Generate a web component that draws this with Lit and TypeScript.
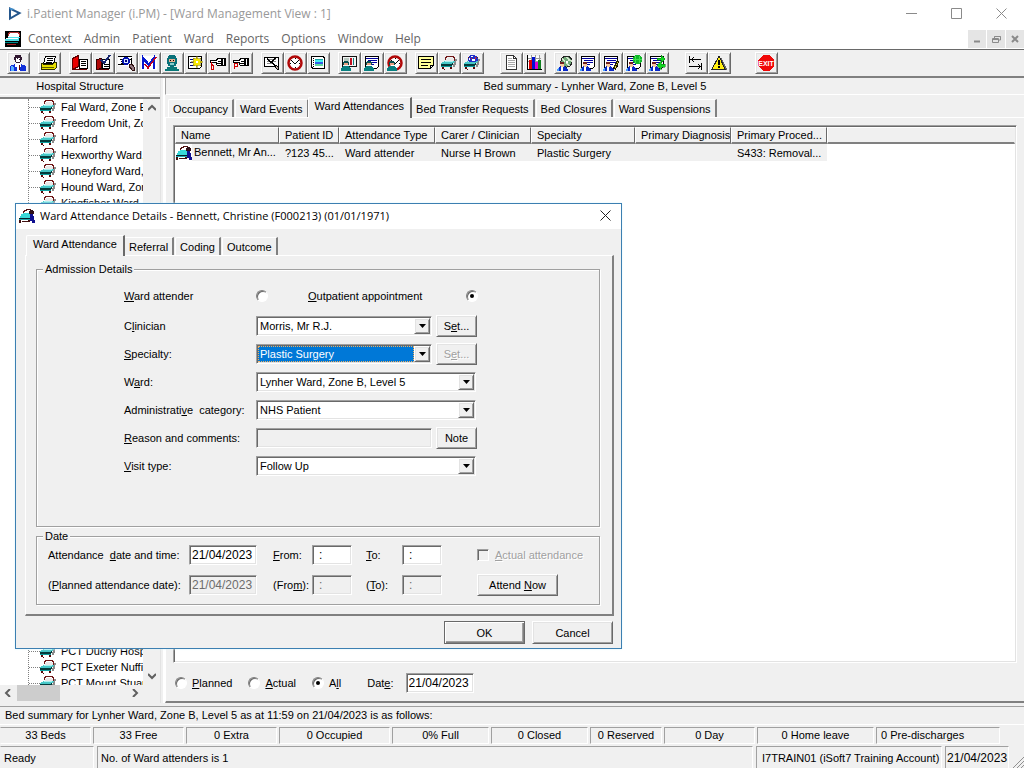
import { LitElement, html, svg, css } from "lit";
import { customElement, property, state } from "lit/decorators.js";
import { classMap } from "lit/directives/class-map.js";

// 16x16 pixel glyphs, composed from a few recurring parts.
const sheet = svg`<path d="M1.500 1.500h13v10l-2 2h-11z" fill="#fff" stroke="#000"/><path d="M2 3.500h12M4 5.500h9M4 7.500h9M4 9.500h6" stroke="#0000a0"/>`;
const teal = svg`<path d="M3 6h4v1h1v3H2V7h1z" fill="#085050"/><path d="M3 8h4v2H3z" fill="#e8a080"/><path d="M0 16v-3h1v-1h1v-1h6v1h1v1h1v3z" fill="#088080"/>`;
const carer = svg`<path d="M3 8h4v4H3z" fill="#f8c8a0"/><path d="M3 7h4v2H3z" fill="#702020"/><path d="M0 16v-2l3-3 2 2 2-2 4 4v1z" fill="#0828c8"/><path d="M4 12h2v4H4z" fill="#fff"/><path d="M0 16v-2l2-1v3z" fill="#48a0ff"/>`;
const clockFace = svg`<circle cx="8" cy="8" r="6.500" fill="#fff" stroke="#b00808" stroke-width="2.500" shape-rendering="auto"/><path d="M8 3v1M8 12v1M3 8h1M12 8h1M4.500 5.500L8 9l3.500-3.500" fill="none" stroke="#000"/>`;
const bedShape = svg`<path d="M13 4h3v2h-1v4h-1v2h-2v-3h1z" fill="#8a8a8a"/><path d="M6 3h6v1h1v2H5V4h1z" fill="#e8e8e8"/><path d="M4 5V2h1V1h8v1h1v4h-1V3h-1V2H6v1H5v2z" fill="#701818"/><path d="M3 6h11v1h-1v1h-1v2H0V8h1V7h2z" fill="#48c8c8"/><path d="M4 6h8v1H4z" fill="#a8f0f0"/><path d="M0 9h11V8h1v2h-1v1H0z" fill="#043c3c"/><path d="M0 11h11v1H0z" fill="#10a0a0"/><path d="M1 12h2v2H1zM9 12h2v2H9zM3 14h1v1H3z" fill="#5a0808"/>`;
const hand = svg`<path d="M.5 5.500h6l1-2h4v7H7.500l-1.500-2V7.500H.5z" fill="#fff" stroke="#000"/><path d="M8 6.500h3M7 8.500h4" stroke="#000"/><path d="M12 3h4v8h-4z" fill="#000"/><path d="M13 4h1v6h-1z" fill="#fff"/>`;

const glyphs: Record<string, unknown> = {
  doctor: svg`<path d="M5 0h6v2h1v3h-1v2h-1v1H6V7H5V5H4V2h1z" fill="#301830"/><path d="M6 3h4v4H6z" fill="#fff"/><path d="M7 3h1v1H7zM9 4h1v1H9z" fill="#301830"/><path d="M0 16v-5h1v-1h3V9h8v1h3v1h1v5z" fill="#1030d8"/><path d="M6 8h4v1h1v3h-1v4H7v-4H5V9h1z" fill="#fff"/><path d="M9 10h1v5H9z" fill="#600"/><path d="M1 16v-5h2v1h1v4z" fill="#58b0ff"/>`,
  print: svg`<path d="M4.500 1.500h10l-2 7h-10z" fill="#fff" stroke="#000"/><path d="M6 3.500h6M6 5.500h6M5 7.500h6" stroke="#000"/><path d="M.5 8.500h2v1h9l2-2h2v5l-2 2H.5z" fill="#e8e000" stroke="#303000"/><path d="M1 12.500h12" stroke="#606000"/>`,
  admit: svg`<path d="M7.500 4.500h8v9h-8z" fill="#fff" stroke="#000"/><path d="M9 6.500h5M9 8.500h5M9 10.500h5" stroke="#000"/><path d="M.5 3.500l6-3v11l-6 3z" fill="#e80000" stroke="#600000"/><path d="M1 14h14v1H1z" fill="#600"/>`,
  admitEdit: svg`<path d="M7.500 4.500h7v9h-7z" fill="#fff" stroke="#000"/><path d="M9 9.500h5M9 11.500h5" stroke="#000"/><path d="M1.500 4.500l5-1v10l-5 1z" fill="#b00808" stroke="#300"/><path d="M6 5l3 3 6-8" fill="none" stroke="#182870" stroke-width="2"/><path d="M1 14h13v1H2z" fill="#500"/>`,
  search: svg`<path d="M0 1h14v10H0z" fill="#fff"/><path d="M0 1.500h14M2 4.500h11M0 9.500h9" stroke="#000"/><path d="M3 6h3M3 8h3" stroke="#000"/><circle cx="8" cy="6" r="3" fill="#d8e8ff" stroke="#0010b0" stroke-width="1.500"/><path d="M7 5h2v2H7z" fill="#000080"/><path d="M13 3h1v6h-1z" fill="#000"/><path d="M11 9h3l2 3v3h-2l-3-4z" fill="#907880" stroke="#301010"/>`,
  tick: svg`<path d="M0 1h16v14H0z" fill="#fff"/><path d="M2 14V3l6 7 5-7v11" fill="none" stroke="#0818d0" stroke-width="2.500"/><path d="M4 9l3 4 8-11" fill="none" stroke="#c00020" stroke-width="1.500"/>`,
  surgeon: svg`<path d="M5 0h6v1h1v2h1v6h-1v2h-2v1H6v-1H4V9H3V3h1V1h1z" fill="#087078"/><path d="M5 4h6v3H5z" fill="#e8b090"/><path d="M6 5h1v1H6zM9 5h1v1H9z" fill="#000"/><path d="M6 8h4v2H6z" fill="#8cc"/><path d="M1 16v-2h2v-2h10v2h2v2z" fill="#087878"/>`,
  fresh: svg`<path d="M1.500 1.500h13v10l-2 2h-11z" fill="#fff" stroke="#000"/><path d="M3 4.500h6M3 7.500h4M3 10.500h5" stroke="#000080"/><path d="M10 1l1 3 3-1-1 3 3 1-3 1 1 3-3-1-1 3-1-3-3 1 1-3-3-1 3-1-1-3 3 1z" fill="#f8e800" stroke="#807000" stroke-width=".5"/><path d="M9 6h2v2H9z" fill="#fff"/>`,
  point: svg`${hand}<path d="M1.500 7v7h2v-3l-2-2" fill="none" stroke="#d00000"/>`,
  pointBack: svg`${hand}<path d="M1.500 14V8.500h3v3h-3" fill="none" stroke="#d00000"/>`,
  write: svg`<path d="M.5 2.500h14v9H.5z" fill="#fff" stroke="#000"/><path d="M3 4.500h9M3 6.500h9M3 8.500h6" stroke="#888"/><path d="M3 4l9 7M11 3L8 7" stroke="#000" stroke-width="1.500"/><path d="M12 10l3 3-1 2-3-3z" fill="#b8a8a0" stroke="#000"/>`,
  clock: clockFace,
  notes: svg`<path d="M1.500 1.500h12v1h1v11h-12v-1h-1z" fill="#fff" stroke="#000"/><path d="M5 4h8v1H5z" fill="#18a0a0"/><path d="M5 5h8v2H5z" fill="#40f0f0"/><path d="M5 7h8v2H5z" fill="#3060e8"/><path d="M5 9h8v2H5z" fill="#60d8a0"/><path d="M3.500 3v10" stroke="#000" stroke-dasharray="1 1"/>`,
  ward: svg`<path d="M1.500 1.500h14v10h-14z" fill="#f4f4f4" stroke="#111"/><path d="M3 3h5v6H3z" fill="#b8c8c0"/><path d="M9 3h2v7H9z" fill="#c01020"/><path d="M12 3h1v7h-1z" fill="#108080"/>${teal}`,
  tealSheet: svg`${sheet}${teal}`,
  tealClock: svg`${clockFace}${teal}`,
  memo: svg`<path d="M.5 1.500h15v9l-3 3H.5z" fill="#ffff98" stroke="#000"/><path d="M3 4.500h10M3 7.500h10M3 10.500h7" stroke="#000"/><path d="M12.500 13v-2.500H15" fill="#fff" stroke="#000"/>`,
  bed: bedShape,
  bedMove: svg`${bedShape}<path d="M6 0h5v1h2v2h1v3h-2v1H5V6H4V3h1V1h1z" fill="#2030c8"/><path d="M7 1h2v1H7zM8 4h3v2H8zM5 3h1v2H5z" fill="#fff"/><path d="M7 3h1v1H7zM11 2h1v2h-1z" fill="#e02020"/>`,
  page: svg`<path d="M3.500.5h7l3 3v11h-10z" fill="#fff" stroke="#333"/><path d="M10.500 0v3.500H14" fill="none" stroke="#333"/><path d="M5 3.500h4M5 5.500h7M5 7.500h7M5 9.500h7M5 11.500h7" stroke="#aaa"/>`,
  chart: svg`<path d="M2 1h12v13H2z" fill="#fff"/><path d="M1 3.500h14M1 6.500h14M5.500 0v14M9.500 0v14M13.500 0v14" stroke="#999"/><path d="M1.500 0v14.500H16" fill="none" stroke="#000"/><path d="M3 5h3v9H3z" fill="#e00000"/><path d="M6 2h3v12H6z" fill="#0010d0"/><path d="M9 7h3v7H9z" fill="#e000d0"/><path d="M12 5h3v9h-3z" fill="#108020"/>`,
  world: svg`<circle cx="9.500" cy="6.500" r="5.500" fill="#70a878" stroke="#222"/><path d="M10 2l2 3 3 1M5 4l3 2M12 11l-2-3" fill="none" stroke="#d8e8d0" stroke-width="1.500"/><path d="M9 6h2v2H9z" fill="#fff"/>${carer}`,
  carerSheet: svg`${sheet}${carer}`,
  carerPen: svg`${sheet}${carer}<path d="M12.500 14.500l-1.500-2 3.500-7 1 1z" fill="#f0e040" stroke="#220"/>`,
  carerGreen: svg`${sheet}<path d="M9 0h5v1h1v1h1v5h-1v1h-1v1H9V8H8V7H7V2h1V1h1z" fill="#10b828"/><path d="M9.500 1v7M13.500 1v7M7 4.500h9" stroke="#40e050"/>${carer}`,
  carerSwap: svg`${sheet}${carer}<path d="M8 3h4V0l4 4-4 4V5H8zM16 9h-4V6L8 10.500l4 4V12h4z" fill="#10d820" stroke="#087010" stroke-width=".5"/>`,
  jump: svg`<path d="M1.500 1v7M2 4.500h11M6 2L3.500 4.500 6 7M13.500 8v7M1 11.500h12M10 9l2.500 2.500L10 14" fill="none" stroke="#000" stroke-width="1.300"/>`,
  warn: svg`<path d="M10 2l6 12-1 1h-3z" fill="#666"/><path d="M8 1L1 14h13z" fill="#ffee10" stroke="#222"/><path d="M7 5h2v5H7zM7 11h2v2H7z" fill="#000"/>`,
  exit: svg`<path d="M5 0h6l5 5v6l-5 5H5l-5-5V5z" fill="#f00808"/><text x="8" y="11" text-anchor="middle" font-family="Liberation Sans, sans-serif" font-size="7" font-weight="bold" fill="#fff">EXIT</text>`,
  patient: svg`<path d="M4 5V3h1V2h2V1h4v1h1" fill="none" stroke="#501010"/><path d="M10 3h1V2h3v1h1v3h-5z" fill="#301018"/><path d="M10 6h4v2h1v4h1v3h-3v-2h-2z" fill="#101090"/><path d="M4 5h6v1h1v4H1V8h1V6h2z" fill="#38d8d8"/><path d="M0 10h11v1H0z" fill="#04202c"/><path d="M0 11h11v1H0z" fill="#20a8b0"/><path d="M0 12h2v3H0zM9 12h2v2H9zM3 13h6v1H3z" fill="#401010"/>`,
  appBed: svg`<path d="M0 0h16v16H0z" fill="#000"/><path d="M4 2h9v1h1v3H3V3h1z" fill="#fff"/><path d="M3 5V2h1V1h9v1h1v3" fill="none" stroke="#b03030"/><path d="M3 6h12v1h-1v3H0V8h1V7h2z" fill="#50e0e8"/><path d="M1 7h12v1H1z" fill="#fff"/><path d="M0 11h13v1H0z" fill="#088"/><path d="M2 13h9v1H2z" fill="#a02020"/>`,
};

const icon = (name: string) =>
  html`<svg class="icon" width="16" height="16" viewBox="0 0 16 16" shape-rendering="crispEdges" aria-hidden="true">${glyphs[name]}</svg>`;

// Shared look of the raised and sunken 3-D edges.
const chrome = css`
  * { box-sizing: border-box; }
  .icon { display: block; flex: none; overflow: visible; }
  button, input, select { font: inherit; color: inherit; margin: 0; border-radius: 0; outline: none; }
  .btn {
    background: #f0f0f0; border: 1px solid; border-color: #fff #696969 #696969 #fff;
    box-shadow: inset 1px 1px #e3e3e3, inset -1px -1px #a0a0a0;
    padding: 0; display: flex; align-items: center; justify-content: center; white-space: nowrap;
  }
  .btn:disabled, .off { color: #a0a0a0; text-shadow: 1px 1px #fff; }
  .sunken {
    background: #fff; border: 1px solid; border-color: #a0a0a0 #fff #fff #a0a0a0;
    box-shadow: inset 1px 1px #696969, inset -1px -1px #e3e3e3; padding: 1px;
  }
  input.sunken { height: 20px; padding: 0 2px; font-size: 12px; }
  input.sunken:disabled { background: #f0f0f0; color: #6d6d6d; }
  input[type="radio"] {
    appearance: none; width: 12px; height: 12px; border-radius: 50%; flex: none; background: #fff;
    border: 1px solid; border-color: #808080 #fff #fff #808080;
    box-shadow: inset 1px 1px #696969; display: grid; place-content: center;
  }
  input[type="radio"]:checked::before { content: ""; width: 4px; height: 4px; border-radius: 50%; background: #000; }
  input[type="checkbox"] {
    appearance: none; width: 12px; height: 12px; flex: none; background: #f0f0f0;
    border: 1px solid; border-color: #a0a0a0 #fff #fff #a0a0a0; box-shadow: inset 1px 1px #696969;
  }
  u { text-underline-offset: 1px; }
`;

@customElement("tab-strip")
export class TabStrip extends LitElement {
  @property({ attribute: false }) tabs: string[] = [];
  @property({ type: Number }) selected = 0;

  static styles = [chrome, css`
    :host { display: flex; align-items: flex-end; height: 20px; padding-left: 3px; }
    .tab {
      height: 18px; padding: 1px 4px 0; margin: 0 1px 0 0; background: #f0f0f0; white-space: nowrap;
      border: solid; border-width: 1px 2px 0 1px; border-color: #fff #808080 #fff #fff;
      border-top-left-radius: 2px;
    }
    .tab.on { height: 21px; padding: 0 6px 4px; margin: 0 -1px -1px -2px; position: relative; border-right-color: #696969; }
  `];

  render() {
    return this.tabs.map((t, i) => html`
      <button role="tab" class=${classMap({ tab: true, on: i === this.selected })}
        aria-selected=${i === this.selected} @click=${() => (this.selected = i)}>${t}</button>`);
  }
}

@customElement("tool-bar")
export class ToolBar extends LitElement {
  private groups: { gap: number; items: string[] }[] = [
    { gap: 0, items: ["doctor"] },
    { gap: 8, items: ["print"] },
    { gap: 8, items: ["admit", "admitEdit", "search", "tick", "surgeon", "fresh", "point", "pointBack"] },
    { gap: 8, items: ["write", "clock", "notes"] },
    { gap: 8, items: ["ward", "tealSheet", "tealClock"] },
    { gap: 8, items: ["memo", "bed", "bedMove"] },
    { gap: 16, items: ["page", "chart"] },
    { gap: 8, items: ["world", "carerSheet", "carerPen", "carerGreen", "carerSwap"] },
    { gap: 16, items: ["jump", "warn"] },
    { gap: 24, items: ["exit"] },
  ];

  static styles = [chrome, css`
    :host { display: flex; align-items: center; height: 29px; padding: 0 7px; background: #f0f0f0; border-top: 1px solid #696969; border-bottom: 2px solid #808080; }
    .group { display: flex; }
    .g8 { margin-left: 8px; }
    .g16 { margin-left: 16px; }
    .g24 { margin-left: 24px; }
    .btn { width: 23px; height: 22px; padding-right: 1px; }
  `];

  render() {
    return this.groups.map((g) => html`
      <div class="group g${g.gap}">
        ${g.items.map((n) => html`<button class="btn" aria-label=${n}>${icon(n)}</button>`)}
      </div>`);
  }
}

@customElement("ward-tree")
export class WardTree extends LitElement {
  private upper = ["Fal Ward, Zone E", "Freedom Unit, Zo", "Harford", "Hexworthy Ward,", "Honeyford Ward,", "Hound Ward, Zor", "Kingfisher Ward"];
  private lower = ["PCT Duchy Hosp", "PCT Exeter Nuffie", "PCT Mount Stuar"];

  static styles = [chrome, css`
    :host { display: grid; grid-template: minmax(0, 1fr) 16px / minmax(0, 1fr) 17px; background: #f0f0f0; border-top: 2px solid #808080; }
    .tree { background: #fff; overflow: hidden; display: flex; flex-direction: column; justify-content: space-between; padding-left: 28px; }
    ul { list-style: none; margin: 0; padding: 0; border-left: 1px dotted #808080; }
    .fill { flex: 1; border-left: 1px dotted #808080; }
    .end { margin-bottom: -6px; }
    li { display: flex; align-items: center; height: 16px; white-space: nowrap; }
    li::before { content: ""; width: 11px; border-top: 1px dotted #808080; flex: none; }
    .name { padding-left: 5px; }
    .v, .h { display: flex; align-items: center; justify-content: space-between; }
    .v { flex-direction: column; padding: 5px 0; }
    .h { padding: 0 4px; }
    .thumb { flex: none; width: 43px; height: 16px; background: #cdcdcd; margin-right: auto; margin-left: 5px; }
    .arrow { flex: none; fill: none; stroke: #606060; stroke-width: 2; }
  `];

  private rows(names: string[]) {
    return names.map((n) => html`<li>${icon("bed")}<span class="name">${n}</span></li>`);
  }

  render() {
    const a = (d: string) => html`<svg class="arrow" width="8" height="8" viewBox="0 0 8 8"><path d=${d} /></svg>`;
    return html`
      <div class="tree">
        <ul>${this.rows(this.upper)}</ul>
        <div class="fill"></div>
        <ul class="end">${this.rows(this.lower)}</ul>
      </div>
      <div class="v">${a("M0 6l4-4 4 4")}${a("M0 2l4 4 4-4")}</div>
      <div class="h">${a("M6 0L2 4l4 4")}<div class="thumb"></div>${a("M2 0l4 4-4 4")}</div>
      <div></div>`;
  }
}

@customElement("attendance-dialog")
export class AttendanceDialog extends LitElement {
  @state() private kind = "out";

  static styles = [chrome, css`
    :host { display: flex; flex-direction: column; background: #f0f0f0; border: 1px solid #3c7fb1; box-shadow: 0 0 2px #d8f4ff; }
    .title { display: flex; align-items: center; height: 25px; background: #fff; padding: 0 10px 2px 3px; font: 11px "Open Sans", "Noto Sans", sans-serif; }
    .title .name { flex: 1; padding-left: 5px; white-space: nowrap; }
    .close { border: 0; background: none; padding: 0; display: flex; }
    .body { padding: 6px 7px 4px 9px; display: flex; flex-direction: column; }
    .page { border: solid; border-width: 1px 2px 2px 1px; border-color: #fff #808080 #808080 #fff; padding: 7px 12px 9px 10px; display: flex; flex-direction: column; gap: 3px; }
    fieldset { min-width: 0; margin: 0; border: 1px solid #a0a0a0; box-shadow: 1px 1px #fff, inset 1px 1px #fff; }
    legend { padding: 0 2px; line-height: 13px; background: #f0f0f0; }
    .admission { padding: 6px 0 46px 87px; }
    .admission legend { margin-left: -81px; }
    .row { display: flex; align-items: center; height: 28px; }
    .row.kind { margin-bottom: 2px; }
    .lab { width: 132px; flex: none; white-space: pre; }
    .second { width: 158px; margin-left: 40px; }
    .combo { display: flex; width: 220px; height: 20px; }
    .combo.short, .text { width: 176px; flex: none; }
    .combo select { flex: 1; min-width: 0; appearance: none; border: 1px solid #fff; background: #fff; padding: 0 1px; height: 16px; }
    .combo.focus select { background: #0078d7; color: #fff; border: 1px dotted #f0b060; }
    .drop { width: 16px; height: 16px; margin: 0; pointer-events: none; }
    .set { width: 41px; height: 22px; margin-left: 4px; }
    .dates { padding: 2px 0 9px 11px; }
    .dates legend { margin-left: -5px; }
    .grid { display: grid; grid-template-columns: 141px 84px 39px 54px 36px 75px 1fr; row-gap: 10px; align-items: center; white-space: pre; }
    .grid > * { height: 20px; line-height: 20px; }
    .date { width: 68px; }
    .time { width: 40px; }
    input.time { padding-left: 6px; }
    .check { display: flex; align-items: center; gap: 6px; }
    .grid .btn { width: 81px; height: 22px; margin: -1px 0; }
    .actions { display: flex; justify-content: flex-end; gap: 7px; padding: 5px 1px 0 0; }
    .actions .btn { width: 81px; height: 23px; }
    .actions .ok { border-color: #696969; box-shadow: inset 1px 1px #fff, inset -1px -1px #808080, inset -2px -2px #a0a0a0; }
  `];

  private combo(id: string, value: string, cls = "") {
    return html`<div class="combo sunken ${cls}">
      <select id=${id}><option>${value}</option></select>
      <span class="btn drop"><svg width="7" height="4" viewBox="0 0 7 4"><path d="M0 0h7L3.500 4z" /></svg></span>
    </div>`;
  }

  render() {
    return html`
      <div class="title">
        ${icon("patient")}
        <span class="name">Ward Attendance Details - Bennett, Christine (F000213) (01/01/1971)</span>
        <button class="close" aria-label="Close"><svg width="11" height="11" viewBox="0 0 11 11"><path d="M.5.5l10 10M10.500.5l-10 10" stroke="#222" fill="none" /></svg></button>
      </div>
      <div class="body">
        <tab-strip .tabs=${["Ward Attendance", "Referral", "Coding", "Outcome"]}></tab-strip>
        <div class="page">
          <fieldset class="admission">
            <legend>Admission Details</legend>
            <div class="row kind">
              <label class="lab" for="attender"><u>W</u>ard attender</label>
              <input type="radio" name="kind" id="attender" .checked=${this.kind === "ward"} @change=${() => (this.kind = "ward")} />
              <label class="second" for="outpatient"><u>O</u>utpatient appointment</label>
              <input type="radio" name="kind" id="outpatient" .checked=${this.kind === "out"} @change=${() => (this.kind = "out")} />
            </div>
            <div class="row"><label class="lab" for="clin">C<u>l</u>inician</label>${this.combo("clin", "Morris, Mr R.J.", "short")}<button class="btn set"><span>S<u>e</u>t...</span></button></div>
            <div class="row"><label class="lab" for="spec"><u>S</u>pecialty:</label>${this.combo("spec", "Plastic Surgery", "short focus")}<button class="btn set" disabled><span>S<u>e</u>t...</span></button></div>
            <div class="row"><label class="lab" for="ward">W<u>a</u>rd:</label>${this.combo("ward", "Lynher Ward, Zone B, Level 5")}</div>
            <div class="row"><label class="lab" for="cat">Administrati<u>v</u>e  category:</label>${this.combo("cat", "NHS Patient")}</div>
            <div class="row"><label class="lab" for="reason"><u>R</u>eason and comments:</label><input class="sunken text" id="reason" disabled /><button class="btn set">Note</button></div>
            <div class="row"><label class="lab" for="visit"><u>V</u>isit type:</label>${this.combo("visit", "Follow Up")}</div>
          </fieldset>
          <fieldset class="dates">
            <legend>Date</legend>
            <div class="grid">
              <label for="d1">Attendance  <u>d</u>ate and time:</label><input class="sunken date" id="d1" value="21/04/2023" />
              <label for="f1"><u>F</u>rom:</label><input class="sunken time" id="f1" value=":" />
              <label for="t1"><u>T</u>o:</label><input class="sunken time" id="t1" value=":" />
              <label class="check off"><input type="checkbox" disabled /><span><u>A</u>ctual attendance</span></label>
              <label for="d2">(<u>P</u>lanned attendance date):</label><input class="sunken date" id="d2" value="21/04/2023" disabled />
              <label for="f2">(Fro<u>m</u>):</label><input class="sunken time" id="f2" value=":" disabled />
              <label for="t2">(<u>T</u>o):</label><input class="sunken time" id="t2" value=":" disabled />
              <button class="btn"><span>Attend <u>N</u>ow</span></button>
            </div>
          </fieldset>
        </div>
        <div class="actions"><button class="btn ok">OK</button><button class="btn">Cancel</button></div>
      </div>`;
  }
}

@customElement("app-root")
export class AppRoot extends LitElement {
  @state() private filter = "All";

  private columns = ["Name", "Patient ID", "Attendance Type", "Carer / Clinician", "Specialty", "Primary Diagnosis", "Primary Proced..."];
  private record = ["Bennett, Mr An...", "?123 45...", "Ward attender", "Nurse H Brown", "Plastic Surgery", "", "S433: Removal..."];
  private counts = ["33 Beds", "33 Free", "0 Extra", "0 Occupied", "0% Full", "0 Closed", "0 Reserved", "0 Day", "0 Home leave", "0 Pre-discharges"];

  static styles = [chrome, css`
    :host { display: flex; flex-direction: column; height: 100vh; overflow: hidden; background: #f0f0f0; color: #000; font: 11px "Liberation Sans", Arial, sans-serif; }
    .segoe { font-family: "Open Sans", "Noto Sans", sans-serif; font-size: 12px; }
    .titlebar { display: flex; align-items: center; height: 28px; flex: none; background: #fff; color: #999; padding: 0 0 2px 8px; }
    .titlebar .name { flex: 1; padding-left: 5px; }
    .win { width: 45px; height: 26px; border: 0; background: none; padding: 0; display: grid; place-content: center; }
    .win svg, .mdi svg { fill: none; stroke: #8a8a8a; display: block; }
    .menubar { display: flex; align-items: center; height: 21px; flex: none; background: #fff; color: #666; padding-left: 5px; }
    .menubar nav { display: flex; flex: 1; gap: 12px; padding-left: 7px; }
    .menubar nav button { border: 0; background: none; padding: 0; }
    .mdis { display: flex; gap: 1px; }
    .mdi { width: 18px; height: 18px; border: 0; padding: 0; background: #e5e5e5; display: grid; place-content: center; }
    .work { flex: 1; min-height: 0; display: grid; grid-template-columns: 161px minmax(0, 1fr); column-gap: 2px; }
    .side { display: flex; flex-direction: column; min-height: 0; padding-bottom: 2px; border-right: 1px solid #e3e3e3; }
    .head { height: 17px; line-height: 16px; text-align: center; border-bottom: 1px solid #fff; flex: none; }
    ward-tree { flex: 1; min-height: 0; margin-top: 2px; }
    .main { display: flex; flex-direction: column; min-height: 0; border-left: 2px solid #fff; }
    .main .head { border-left: 1px solid #a0a0a0; }
    tab-strip { margin-top: 2px; flex: none; }
    .panel { flex: 1; min-height: 0; display: flex; flex-direction: column; border: solid; border-width: 1px 0 2px 1px; border-color: #fff #fff #808080 #fff; padding: 7px 7px 0 7px; }
    .list { flex: 1; min-height: 0; }
    table { border-collapse: separate; border-spacing: 0; table-layout: fixed; width: 100%; }
    .w104 { width: 104px; }
    .w60 { width: 60px; }
    .w96 { width: 96px; }
    th, td { padding: 0 0 0 6px; text-align: left; font-weight: normal; white-space: nowrap; overflow: hidden; }
    th { height: 17px; padding-left: 5px; background: #f0f0f0; border: solid; border-width: 1px 1px 2px 1px; border-color: #fff #696969 #808080 #fff; }
    th:last-child { border-right-color: #f0f0f0; }
    td { height: 17px; background: #f0f0f0; }
    td:last-child { background: #fff; }
    td:first-child { padding-left: 1px; background: #fff; }
    .who { display: flex; align-items: center; }
    .who span { background: #f0f0f0; flex: 1; line-height: 17px; padding-left: 2px; }
    .filter { height: 38px; flex: none; display: flex; align-items: center; padding: 2px 0 0 2px; }
    .filter label { display: flex; align-items: center; gap: 5px; margin-right: 16px; }
    .filter label.date { gap: 12px; margin-left: 10px; }
    .filter .date input { width: 68px; }
    .bar { flex: none; border-top: 1px solid #a0a0a0; border-bottom: 1px solid #fff; }
    .summary { margin-top: 3px; height: 19px; line-height: 17px; padding-left: 5px; }
    .counts { flex: none; display: grid; grid-template-columns: 91fr 91fr 91fr 111fr 97fr 97fr 72fr 91fr 117fr 124fr; gap: 2px; padding: 2px 24px 2px 0; }
    .cell { border: 1px solid; border-color: #a0a0a0 #fff #fff #a0a0a0; height: 17px; line-height: 15px; text-align: center; white-space: nowrap; overflow: hidden; }
    .counts .cell:last-child { text-align: left; padding-left: 4px; }
    .counts .cell:first-child, .status .cell:first-child { border-left-color: #f0f0f0; }
    .status { flex: none; display: grid; grid-template-columns: 94px minmax(0, 1fr) 186px 64px 12px; column-gap: 3px; height: 22px; }
    .status .cell { height: 23px; line-height: 22px; text-align: left; padding: 0 0 0 3px; }
    .status .cell.end { padding-left: 5px; }
    .status .cell.day { padding-left: 1px; font-size: 12px; }
    .grip { align-self: end; stroke: #909090; fill: none; }
    attendance-dialog { position: absolute; left: 15px; top: 203px; width: 607px; }
  `];

  private radio(key: string, label: unknown) {
    return html`<label><input type="radio" name="filter" .checked=${this.filter === key} @change=${() => (this.filter = key)} /><span>${label}</span></label>`;
  }

  render() {
    return html`
      <header class="titlebar segoe">
        <svg width="14" height="16" viewBox="0 0 14 16"><path d="M2 3.500v10L11.500 8z" fill="#fff" stroke="#24568c" stroke-width="2" /><path d="M1 3l6 1-4 1z" fill="#4aa0e0" /></svg>
        <span class="name">i.Patient Manager (i.PM) - [Ward Management View : 1]</span>
        <button class="win" aria-label="Minimize"><svg width="11" height="11"><path d="M0 5.500h11" /></svg></button>
        <button class="win" aria-label="Maximize"><svg width="11" height="11"><path d="M.5.5h10v10H.5z" /></svg></button>
        <button class="win" aria-label="Close"><svg width="11" height="11"><path d="M.5.5l10 10M10.500.5l-10 10" /></svg></button>
      </header>
      <div class="menubar segoe">
        ${icon("appBed")}
        <nav>${["Context", "Admin", "Patient", "Ward", "Reports", "Options", "Window", "Help"].map((m) => html`<button>${m}</button>`)}</nav>
        <div class="mdis">
          <button class="mdi" aria-label="Minimize view"><svg width="8" height="8"><path d="M1 6.500h6" stroke-width="2" /></svg></button>
          <button class="mdi" aria-label="Restore view"><svg width="9" height="8"><path d="M2.500 3V1.500h6v3.500H7M.5 3.500h6v4h-6zM.5 4.500h6M2.500 1.500h6" /></svg></button>
          <button class="mdi" aria-label="Close view"><svg width="8" height="8"><path d="M1 1l6 6M7 1L1 7" stroke-width="2" /></svg></button>
        </div>
      </div>
      <tool-bar></tool-bar>
      <div class="work">
        <aside class="side">
          <div class="head">Hospital Structure</div>
          <ward-tree></ward-tree>
        </aside>
        <main class="main">
          <div class="head">Bed summary - Lynher Ward, Zone B, Level 5</div>
          <tab-strip .tabs=${["Occupancy", "Ward Events", "Ward Attendances", "Bed Transfer Requests", "Bed Closures", "Ward Suspensions"]} .selected=${2}></tab-strip>
          <div class="panel">
            <div class="list sunken">
              <table>
                <colgroup><col class="w104" /><col class="w60" /><col class="w96" /><col class="w96" /><col class="w104" /><col class="w96" /><col class="w96" /><col /></colgroup>
                <thead><tr>${this.columns.map((c) => html`<th>${c}</th>`)}<th></th></tr></thead>
                <tbody><tr>${this.record.map((c, i) => html`<td>${i ? c : html`<div class="who">${icon("patient")}<span>${c}</span></div>`}</td>`)}<td></td></tr></tbody>
              </table>
            </div>
            <div class="filter">
              ${this.radio("Planned", html`<u>P</u>lanned`)}
              ${this.radio("Actual", html`<u>A</u>ctual`)}
              ${this.radio("All", html`A<u>l</u>l`)}
              <label class="date"><span>Dat<u>e</u>:</span><input class="sunken" value="21/04/2023" /></label>
            </div>
          </div>
        </main>
      </div>
      <div class="bar summary">Bed summary for Lynher Ward, Zone B, Level 5 as at 11:59 on 21/04/2023 is as follows:</div>
      <div class="counts">${this.counts.map((c) => html`<div class="cell">${c}</div>`)}</div>
      <footer class="status">
        <div class="cell">Ready</div>
        <div class="cell">No. of Ward attenders is 1</div>
        <div class="cell end">I7TRAIN01 (iSoft7 Training Account)</div>
        <div class="cell day">21/04/2023</div>
        <svg class="grip" width="12" height="12"><path d="M12 0L0 12M12 4l-8 8M12 8l-4 4" /></svg>
      </footer>
      <attendance-dialog></attendance-dialog>`;
  }
}
